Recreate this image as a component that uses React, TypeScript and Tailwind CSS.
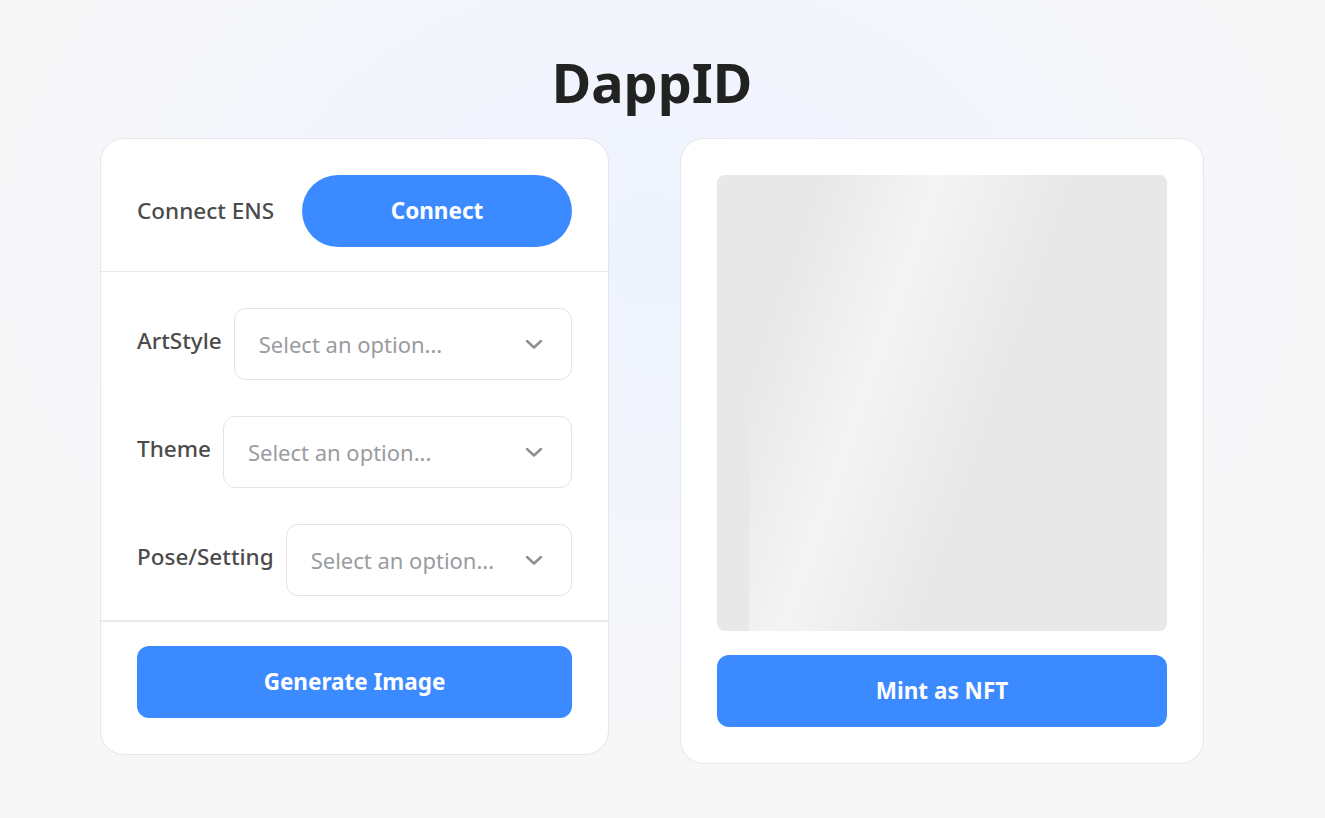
import { useState } from "react"

const font = { fontFamily: '"Noto Sans", "Open Sans", sans-serif' }

function Chevron() {
	return (
		<svg width="18" height="12" viewBox="0 0 18 12" fill="none" className="shrink-0">
			<polyline points="2,3 9,9.5 16,3" stroke="#8e8e93" strokeWidth="2.4" strokeLinecap="round" strokeLinejoin="round" />
		</svg>
	)
}

function SelectRow({ label }: { label: string }) {
	const [value] = useState("")
	return (
		<div className="flex items-start gap-3">
			<span className="mt-[16px] text-[22.5px] font-medium text-[#4b4b4b] whitespace-nowrap">{label}</span>
			<button className="flex-1 min-w-0 h-[72px] flex items-center justify-between pl-6 pr-[28px] bg-white border border-[#e4e4e7] rounded-xl text-left">
				<span className="text-[22px] text-[#9b9b9f] truncate">{value || "Select an option..."}</span>
				<Chevron />
			</button>
		</div>
	)
}

export default function App() {
	return (
		<div
			className="min-h-screen w-full bg-[radial-gradient(ellipse_700px_500px_at_650px_250px,#edf3fe_0%,#f3f5fc_50%,#f7f7f8_100%)]"
			style={font}
		>
			<div className="w-[1104px] ml-[100px] pt-[47px]">
				<h1 className="text-center text-[54px] leading-[70px] font-bold text-[#222222] mb-[21px]">DappID</h1>

				<div className="flex items-start gap-[71px]">
					{/* left: prompt form */}
					<div className="w-[509px] bg-white border border-[#e6e6eb] rounded-3xl">
						<div className="flex items-center justify-between px-9 pt-9 pb-6 border-b border-[#e8e8ec]">
							<span className="text-[22.5px] font-medium text-[#4b4b4b]">Connect ENS</span>
							<button className="w-[270px] h-[72px] rounded-full bg-[#3b8aff] text-white text-[22.5px] font-bold">Connect</button>
						</div>

						<div className="flex flex-col gap-9 px-9 pt-9 pb-6 border-b-2 border-[#e8e8ec]">
							<SelectRow label="ArtStyle" />
							<SelectRow label="Theme" />
							<SelectRow label="Pose/Setting" />
						</div>

						<div className="px-9 pt-6 pb-9">
							<button className="w-full h-[72px] rounded-xl bg-[#3b8aff] text-white text-[22.5px] font-bold">Generate Image</button>
						</div>
					</div>

					{/* right: preview */}
					<div className="w-[524px] bg-white border border-[#e6e6eb] rounded-3xl p-9">
						<div className="relative h-[456px] rounded-lg overflow-hidden bg-[#e8e8e8]">
							<div className="absolute inset-y-0 left-[32px] right-0 bg-[linear-gradient(109deg,#e8e8e8_13%,#f4f4f4_33%,#e8e8e8_56%)]" />
						</div>
						<button className="mt-6 w-full h-[72px] rounded-xl bg-[#3b8aff] text-white text-[22.5px] font-bold">Mint as NFT</button>
					</div>
				</div>
			</div>
		</div>
	)
}
